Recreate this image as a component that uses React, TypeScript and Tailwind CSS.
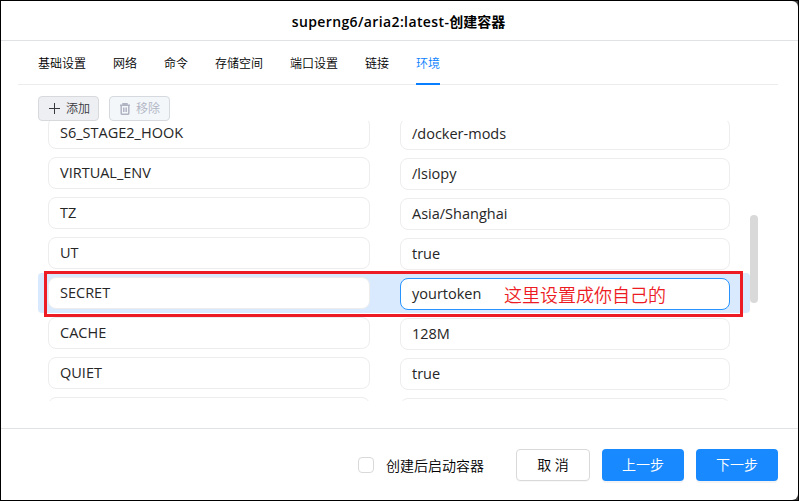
const tabs = ["基础设置", "网络", "命令", "存储空间", "端口设置", "链接", "环境"];

type Variable = { name: string; value: string; selected?: boolean };

const variables: Variable[] = [
  { name: "S6_STAGE2_HOOK", value: "/docker-mods" },
  { name: "VIRTUAL_ENV", value: "/lsiopy" },
  { name: "TZ", value: "Asia/Shanghai" },
  { name: "UT", value: "true" },
  { name: "SECRET", value: "yourtoken", selected: true },
  { name: "CACHE", value: "128M" },
  { name: "QUIET", value: "true" },
  { name: "", value: "" },
];

function PlusIcon() {
  return (
    <svg className="h-[11px] w-[11px] shrink-0" viewBox="0 0 11 11" fill="none" stroke="currentColor" strokeWidth="1">
      <path d="M0 5.5H11M5.5 0V11" />
    </svg>
  );
}

function TrashIcon() {
  return (
    <svg className="h-3 w-[10px] shrink-0" viewBox="0 0 10 12" fill="none" stroke="currentColor" strokeWidth="1.5">
      <path d="M0 2.3H10M3 2V.7H7V2M1.2 2.5V10.2Q1.2 11.3 2.3 11.3H7.7Q8.8 11.3 8.8 10.2V2.5M3.8 4.5V9M6.2 4.5V9" />
    </svg>
  );
}

function VariableRow({ name, value, selected }: Variable) {
  return (
    <div className={`flex h-10 w-[712px] shrink-0 items-start rounded pl-[10px] pt-1 text-[14.5px] text-[#262626] ${selected ? "bg-[#d9eaff]" : ""}`}>
      <div className="flex h-8 w-[322px] items-center rounded-lg border border-[#ededee] bg-white pl-[11px]">{name}</div>
      <div className={`ml-[30px] mt-px flex h-8 w-[330px] items-center rounded-lg border bg-white pl-[11px] ${selected ? "border-[#2693ff]" : "border-[#ededee]"}`}>
        {value}
      </div>
    </div>
  );
}

export default function App() {
  return (
    <div className="relative h-[501px] w-[799px] overflow-hidden border border-black bg-[#444] font-['Open_Sans','Noto_Sans_CJK_SC',sans-serif] text-black">
      <div className="flex h-full flex-col rounded-r-md bg-white">
        <header className="flex h-10 shrink-0 items-center justify-center border-b border-[#e1e2e3] pr-[2px] pt-[3px] text-sm font-semibold">
          <span className="tracking-[0.38px]">superng6/aria2:latest-</span>
          <span>创建容器</span>
        </header>
        <nav className="ml-[17px] flex h-11 w-[760px] shrink-0 gap-[27px] border-b border-[#ededee] pl-5 text-xs font-[350]">
          {tabs.map((tab) => (
            <span
              key={tab}
              className={`flex h-11 items-center whitespace-nowrap ${tab === "环境" ? "border-b-2 border-[#087fff] pt-1 text-[#087fff]" : "pt-[2px]"}`}
            >
              {tab}
            </span>
          ))}
        </nav>
        <div className="ml-[37px] mt-[11px] flex h-[25px] shrink-0 gap-[10px] text-xs font-[350]">
          <button className="flex w-[61px] items-center gap-[6px] whitespace-nowrap rounded border border-[#d8d9dc] bg-[#eeeff2] pl-[10px] text-[#38393d]">
            <PlusIcon />
            添加
          </button>
          <button className="flex w-[61px] items-center gap-[6px] whitespace-nowrap rounded border border-[#d6dade] bg-[#f3f7fa] pl-[10px] text-[#b0b3c2]">
            <TrashIcon />
            移除
          </button>
        </div>
        <div className="ml-[37px] flex h-[280px] w-[720px] shrink-0 overflow-hidden">
          <div className="-mt-2 flex flex-col">
            {variables.map((item, i) => (
              <VariableRow key={i} {...item} />
            ))}
          </div>
          <div className="mt-[94px] h-[88px] w-2 rounded-full bg-[#d9d9d9]" />
        </div>
        <footer className="mt-[27px] flex h-[72px] shrink-0 items-center border-t border-[#e1e2e3] pl-[357px] text-sm font-[350]">
          <span className="h-4 w-4 rounded border border-[#d9d9d9]" />
          <span className="ml-3 w-[98px] whitespace-nowrap pt-[2px]">创建后启动容器</span>
          <button className="ml-8 h-8 w-[74px] rounded border border-[#d9d9d9] shadow-[0_1px_1px_#00000008]">取 消</button>
          <button className="ml-3 h-8 w-[82px] rounded bg-[#1989ff] text-white shadow-[0_2px_0_#0000000b]">上一步</button>
          <button className="ml-3 h-8 w-[82px] rounded bg-[#1989ff] text-white shadow-[0_2px_0_#0000000b]">下一步</button>
        </footer>
      </div>
      <div className="absolute left-[43px] top-[270px] h-[46px] w-[699px] border-[3px] border-[#ed1c24]" />
      <span className="absolute left-[503px] top-[280px] whitespace-nowrap text-lg font-[350] leading-7 text-[#ed1c24]">这里设置成你自己的</span>
    </div>
  );
}
